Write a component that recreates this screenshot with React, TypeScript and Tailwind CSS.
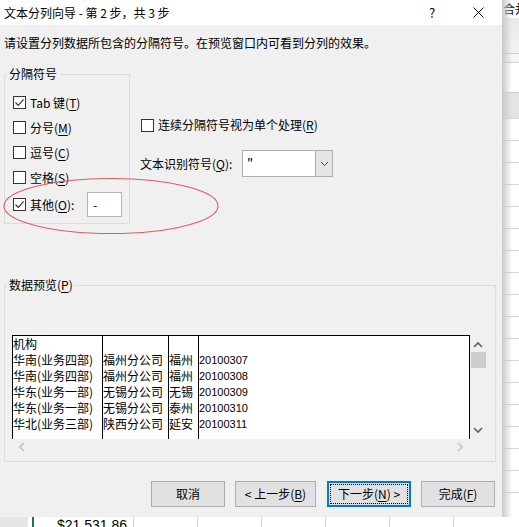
import React from 'react';

const rows = [
  ['机构', '', '', ''],
  ['华南(业务四部)', '福州分公司', '福州', '20100307'],
  ['华南(业务四部)', '福州分公司', '福州', '20100308'],
  ['华东(业务一部)', '无锡分公司', '无锡', '20100309'],
  ['华东(业务一部)', '无锡分公司', '泰州', '20100310'],
  ['华北(业务三部)', '陕西分公司', '延安', '20100311'],
];

const Key: React.FC<{ c: string }> = ({ c }) => (
  <span className="underline underline-offset-2">{c}</span>
);

const Box: React.FC<{ checked?: boolean }> = ({ checked }) => (
  <span className="flex h-[13px] w-[13px] shrink-0 items-center justify-center border border-[#333] bg-white">
    {checked && (
      <svg width="11" height="11" viewBox="0 0 11 11">
        <path d="M1.5 5.5 L4.3 8.4 L9.6 2.4" fill="none" stroke="#333" strokeWidth="1.1" />
      </svg>
    )}
  </span>
);

const Chevron: React.FC<{ dir: 'up' | 'down' | 'left' | 'right'; color: string }> = ({ dir, color }) => {
  const d = {
    up: 'M1 6 L5 2 L9 6',
    down: 'M1 2 L5 6 L9 2',
    left: 'M6 1 L2 5 L6 9',
    right: 'M2 1 L6 5 L2 9',
  }[dir];
  const horiz = dir === 'up' || dir === 'down';
  return (
    <svg width={horiz ? 10 : 8} height={horiz ? 8 : 10} viewBox={horiz ? '0 0 10 8' : '0 0 8 10'}>
      <path d={d} fill="none" stroke={color} strokeWidth="1.6" />
    </svg>
  );
};

const Dialog: React.FC = () => (
  <div className="relative flex h-[517px] w-[502px] shrink-0 flex-col bg-[#f0f0f0] text-[12px] leading-4 text-black">
    {/* title bar */}
    <div className="flex h-[25px] items-center bg-white pl-[4px] pr-[1px]">
      <span className="flex-1 whitespace-nowrap">文本分列向导 - 第 2 步，共 3 步</span>
      <span className="flex w-[46px] justify-center text-[13px]">?</span>
      <span className="flex w-[46px] justify-center">
        <svg width="11" height="11" viewBox="0 0 11 11">
          <path d="M0.5 0.5 L10.5 10.5 M10.5 0.5 L0.5 10.5" stroke="#111" strokeWidth="1" />
        </svg>
      </span>
    </div>

    <div className="mt-[10px] whitespace-nowrap pl-[4px]">请设置分列数据所包含的分隔符号。在预览窗口内可看到分列的效果。</div>

    <div className="mt-[15px] flex items-start">
      <fieldset className="ml-[4px] w-[126px] border border-[#dcdcdc] pb-[6px] pl-[2px]">
        <legend className="px-[2px]">分隔符号</legend>
        <div className="mt-[8px] flex flex-col pl-[6px]">
          <label className="flex h-[25px] items-center gap-[4px]">
            <Box checked />
            <span>Tab 键(<Key c="T" />)</span>
          </label>
          <label className="flex h-[25px] items-center gap-[4px]">
            <Box />
            <span>分号(<Key c="M" />)</span>
          </label>
          <label className="flex h-[25px] items-center gap-[4px]">
            <Box />
            <span>逗号(<Key c="C" />)</span>
          </label>
          <label className="flex h-[25px] items-center gap-[4px]">
            <Box />
            <span>空格(<Key c="S" />)</span>
          </label>
          <label className="mt-[2px] flex h-[25px] items-center gap-[4px]">
            <Box checked />
            <span className="w-[53px]">其他(<Key c="O" />):</span>
            <span className="flex h-[25px] w-[35px] items-center border border-[#b4b4b4] bg-white pl-[5px]">-</span>
          </label>
        </div>
      </fieldset>

      <div className="ml-[10px] flex flex-col">
        <label className="mt-[51px] flex h-4 items-center gap-[4px] pl-[1px]">
          <Box />
          <span className="whitespace-nowrap">连续分隔符号视为单个处理(<Key c="R" />)</span>
        </label>
        <div className="mt-[17px] flex h-[27px] items-center">
          <span className="w-[102px] whitespace-nowrap">文本识别符号(<Key c="Q" />):</span>
          <div className="flex h-[27px] w-[91px] border border-[#adadad] bg-white">
            <span className="flex-1 pl-[4px] pt-[4px] text-[13px]">"</span>
            <span className="flex w-[17px] items-center justify-center border-l border-[#adadad] bg-[#e5e5e5]">
              <svg width="9" height="6" viewBox="0 0 9 6">
                <path d="M1 1 L4.5 4.5 L8 1" fill="none" stroke="#444" strokeWidth="1" />
              </svg>
            </span>
          </div>
        </div>
      </div>
    </div>

    <fieldset className="ml-[4px] mt-[53px] w-[492px] border border-[#dcdcdc] pb-[6px] pl-[2px]">
      <legend className="px-[2px]">数据预览(<Key c="P" />)</legend>
      <div className="ml-[5px] mt-[42px] flex w-[474px] flex-col">
        <div className="flex h-[104px]">
          <div className="flex w-[458px] overflow-hidden border-x border-t border-black bg-white">
            {[90, 66, 30].map((w, ci) => (
              <div key={ci} className="flex shrink-0 flex-col border-r border-black" style={{ width: w }}>
                {rows.map((r, ri) => (
                  <span key={ri} className="h-4 whitespace-nowrap">{r[ci]}</span>
                ))}
              </div>
            ))}
            <div className="flex flex-1 flex-col">
              {rows.map((r, ri) => (
                <span key={ri} className="h-4 whitespace-nowrap font-['Liberation_Sans',sans-serif] text-[11px]">{r[3]}</span>
              ))}
            </div>
          </div>
          <div className="flex w-[16px] flex-col items-center">
            <span className="mt-[6px] flex h-[8px] items-center">
              <Chevron dir="up" color="#606060" />
            </span>
            <span className="mt-[3px] h-[16px] w-[15px] bg-[#cdcdcd]" />
            <span className="mt-auto mb-[5px] flex h-[8px] items-center">
              <Chevron dir="down" color="#606060" />
            </span>
          </div>
        </div>
        <div className="flex h-[16px] items-center justify-between pl-[6px] pr-[22px]">
          <Chevron dir="left" color="#c2c2c2" />
          <Chevron dir="right" color="#c2c2c2" />
        </div>
      </div>
    </fieldset>

    <div className="mt-[19px] flex h-[26px] pl-[151px]">
      <button className="h-[26px] w-[74px] border border-[#adadad] bg-[#e1e1e1]">取消</button>
      <button className="ml-[10px] h-[26px] w-[81px] border border-[#adadad] bg-[#e1e1e1]">
        &lt; 上一步(<Key c="B" />)
      </button>
      <button className="ml-[11px] flex h-[26px] w-[84px] border-2 border-[#0078d7] bg-[#e1e1e1] p-[1px]">
        <span className="flex h-full w-full items-center justify-center border border-dotted border-black">
          下一步(<Key c="N" />) &gt;
        </span>
      </button>
      <button className="ml-[10px] h-[26px] w-[74px] border border-[#adadad] bg-[#e1e1e1]">
        完成(<Key c="F" />)
      </button>
    </div>

    {/* red annotation ellipse */}
    <svg className="pointer-events-none absolute left-[2px] top-[177px]" width="218" height="58" viewBox="0 0 218 58">
      <ellipse cx="109" cy="29" rx="107" ry="27.5" fill="none" stroke="#e05a5a" strokeWidth="1.1" />
    </svg>
  </div>
);

const SheetStrip: React.FC = () => (
  <div className="relative flex w-[17px] flex-col overflow-hidden bg-white">
    <div className="h-[18px] whitespace-nowrap pl-[1px] pt-[1px] text-[12px] leading-4">合并</div>
    <div className="h-[35px] bg-gradient-to-b from-[#e9e9e9] to-[#f2f2f2]" />
    <div className="h-[10px] border-y border-[#cfcfcf] bg-[#f5f5f5]" />
    <div className="h-[29px]" />
    <div className="h-[26px] border-t border-[#cfcfcf] bg-[#e4e4e4]" />
    {Array.from({ length: 18 }).map((_, i) => (
      <div key={i} className="h-[22px] shrink-0 border-t border-[#d4d4d4]" />
    ))}
    <div className="pointer-events-none absolute inset-y-0 left-0 w-[10px] bg-gradient-to-r from-[#c9c9c9] to-transparent" />
  </div>
);

export default function App() {
  return (
    <div className="flex h-[527px] w-[519px] flex-col overflow-hidden bg-white font-['Noto_Sans_CJK_SC',sans-serif]">
      <div className="flex h-[517px] shrink-0">
        <Dialog />
        <SheetStrip />
      </div>
      <div className="flex h-[10px] overflow-hidden bg-white">
        <div className="w-[28px] shrink-0 bg-[#e6e6e6]" />
        <div className="w-[4px] shrink-0" />
        <div className="w-[2px] shrink-0 bg-[#217346]" />
        <div className="w-[100px] shrink-0 border-r border-[#d4d4d4] pr-[6px] pt-[1px] text-right font-['Liberation_Sans',sans-serif] text-[14px] leading-[14px]">
          $21,531.86
        </div>
        {[0, 1, 2, 3, 4].map((i) => (
          <div key={i} className="w-[64px] shrink-0 border-r border-[#d4d4d4]" />
        ))}
      </div>
    </div>
  );
}
